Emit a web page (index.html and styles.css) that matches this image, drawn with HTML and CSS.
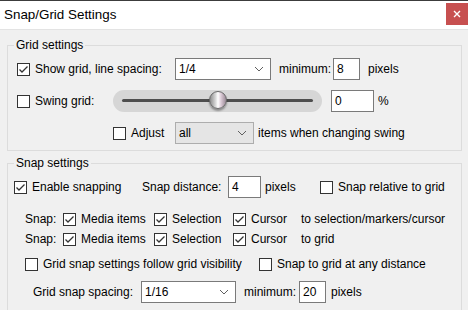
FILE: index.html
```html
<!DOCTYPE html>
<html lang="en">
<head>
    <meta charset="UTF-8">
    <title>Snap/Grid Settings</title>
    <link rel="stylesheet" href="styles.css">
</head>
<body>
    <div class="dialog">
        <div class="titlebar">
            <span class="title">Snap/Grid Settings</span>
            <span class="close">
                <svg width="8" height="8" viewBox="0 0 8 8"><path d="M1 1L7 7M7 1L1 7" stroke="#fff" stroke-width="1.4"/></svg>
            </span>
        </div>

        <fieldset class="group grid-group">
            <legend>Grid settings</legend>
            <div class="row r1">
                <label class="check w-show"><span class="box on"><svg width="11" height="11" viewBox="0 0 11 11"><path d="M1.5 5.5L4 8L9.5 2.5" fill="none" stroke="#333" stroke-width="1.3"/></svg></span>Show grid, line spacing:</label>
                <div class="combo w96"><span>1/4</span><svg width="10" height="6" viewBox="0 0 10 6"><path d="M1 1L5 5L9 1" fill="none" stroke="#606060" stroke-width="1"/></svg></div>
                <span class="lbl gap8 w54">minimum:</span>
                <div class="edit w27">8</div>
                <span class="lbl gap8">pixels</span>
            </div>
            <div class="row r2">
                <label class="check w-swing"><span class="box"></span>Swing grid:</label>
                <div class="slider">
                    <span class="track"></span>
                    <span class="thumb"></span>
                </div>
                <div class="edit w43 gap9">0</div>
                <span class="lbl gap4">%</span>
            </div>
            <div class="row r3">
                <label class="check w-adjust"><span class="box"></span>Adjust</label>
                <div class="combo list w79"><span>all</span><svg width="10" height="6" viewBox="0 0 10 6"><path d="M1 1L5 5L9 1" fill="none" stroke="#606060" stroke-width="1"/></svg></div>
                <span class="lbl gap4">items when changing swing</span>
            </div>
        </fieldset>

        <fieldset class="group snap-group">
            <legend>Snap settings</legend>
            <div class="row s1">
                <label class="check w-enable"><span class="box on"><svg width="11" height="11" viewBox="0 0 11 11"><path d="M1.5 5.5L4 8L9.5 2.5" fill="none" stroke="#333" stroke-width="1.3"/></svg></span>Enable snapping</label>
                <span class="lbl w86">Snap distance:</span>
                <div class="edit w33">4</div>
                <span class="lbl gap4 w55">pixels</span>
                <label class="check"><span class="box"></span>Snap relative to grid</label>
            </div>
            <div class="row s2">
                <span class="lbl w38">Snap:</span>
                <label class="check w91"><span class="box on"><svg width="11" height="11" viewBox="0 0 11 11"><path d="M1.5 5.5L4 8L9.5 2.5" fill="none" stroke="#333" stroke-width="1.3"/></svg></span>Media items</label>
                <label class="check w79"><span class="box on"><svg width="11" height="11" viewBox="0 0 11 11"><path d="M1.5 5.5L4 8L9.5 2.5" fill="none" stroke="#333" stroke-width="1.3"/></svg></span>Selection</label>
                <label class="check w68"><span class="box on"><svg width="11" height="11" viewBox="0 0 11 11"><path d="M1.5 5.5L4 8L9.5 2.5" fill="none" stroke="#333" stroke-width="1.3"/></svg></span>Cursor</label>
                <span class="lbl">to selection/markers/cursor</span>
            </div>
            <div class="row s3">
                <span class="lbl w38">Snap:</span>
                <label class="check w91"><span class="box on"><svg width="11" height="11" viewBox="0 0 11 11"><path d="M1.5 5.5L4 8L9.5 2.5" fill="none" stroke="#333" stroke-width="1.3"/></svg></span>Media items</label>
                <label class="check w79"><span class="box on"><svg width="11" height="11" viewBox="0 0 11 11"><path d="M1.5 5.5L4 8L9.5 2.5" fill="none" stroke="#333" stroke-width="1.3"/></svg></span>Selection</label>
                <label class="check w68"><span class="box on"><svg width="11" height="11" viewBox="0 0 11 11"><path d="M1.5 5.5L4 8L9.5 2.5" fill="none" stroke="#333" stroke-width="1.3"/></svg></span>Cursor</label>
                <span class="lbl">to grid</span>
            </div>
            <div class="row s4">
                <label class="check w234"><span class="box"></span>Grid snap settings follow grid visibility</label>
                <label class="check"><span class="box"></span>Snap to grid at any distance</label>
            </div>
            <div class="row s5">
                <span class="lbl w108">Grid snap spacing:</span>
                <div class="combo w95"><span>1/16</span><svg width="10" height="6" viewBox="0 0 10 6"><path d="M1 1L5 5L9 1" fill="none" stroke="#606060" stroke-width="1"/></svg></div>
                <span class="lbl gap8 w55">minimum:</span>
                <div class="edit w27">20</div>
                <span class="lbl gap5">pixels</span>
            </div>
        </fieldset>
    </div>
</body>
</html>
```

FILE: styles.css
```css
body {
    margin: 0;
    padding: 0;
    background: #f0f0f0;
    font-family: 'Liberation Sans', Arial, sans-serif;
    font-size: 12px;
    color: #000;
    overflow: hidden;
}
.dialog {
    width: 468px;
    height: 310px;
    overflow: hidden;
}
.titlebar {
    display: flex;
    justify-content: space-between;
    height: 28px;
    background: #fff;
    border-top: 1px solid #3c3c3c;
    border-bottom: 1px solid #e3e3e3;
}
.title {
    font-size: 13.4px;
    padding-left: 4px;
    line-height: 28px;
}
.close {
    display: flex;
    align-items: center;
    justify-content: center;
    width: 22px;
    height: 22px;
    margin-top: 2px;
    background: #c75050;
}

/* group boxes */
.group {
    margin: 0 6px 0 7px;
    padding: 0;
    border: 1px solid #dcdcdc;
    min-width: 0;
}
.group legend {
    margin-left: 6px;
    padding: 0 2px;
    line-height: 16px;
}
.grid-group {
    margin-top: 7px;
    padding-bottom: 6px;
}
.snap-group {
    margin-top: 4px;
    padding-bottom: 20px;
}

.row {
    display: flex;
    align-items: center;
    height: 22px;
    white-space: nowrap;
}
.r1 { margin-top: 5px; margin-left: 9px; }
.r2 { margin-top: 10px; margin-left: 9px; }
.r3 { margin-top: 10px; margin-left: 105px; }
.s1 { margin-top: 5px; margin-left: 6px; }
.s2 { margin-top: 11px; margin-left: 17px; height: 20px; }
.s3 { margin-left: 17px; height: 20px; }
.s4 { margin-top: 5px; margin-left: 17px; height: 20px; }
.s5 { margin-top: 7px; margin-left: 25px; }

/* checkbox */
.check {
    display: flex;
    align-items: center;
    gap: 5px;
    flex: none;
}
.box {
    display: flex;
    align-items: center;
    justify-content: center;
    width: 11px;
    height: 11px;
    border: 1px solid #333;
    background: #fff;
    flex: none;
}

.lbl { flex: none; }

/* combo and edit */
.combo {
    display: flex;
    align-items: center;
    justify-content: space-between;
    box-sizing: border-box;
    height: 22px;
    padding: 0 6px 0 3px;
    border: 1px solid #7a7a7a;
    background: #fff;
    flex: none;
}
.combo.list {
    background: #e5e5e5;
    border-color: #adadad;
}
.edit {
    box-sizing: border-box;
    height: 22px;
    line-height: 20px;
    padding-left: 3px;
    border: 1px solid #7a7a7a;
    background: #fff;
    flex: none;
}

/* slider */
.slider {
    position: relative;
    width: 209px;
    height: 22px;
    border-radius: 11px;
    background: #d6d6d6;
    flex: none;
}
.slider .track {
    position: absolute;
    left: 9px;
    right: 9px;
    top: 9px;
    height: 3px;
    border-radius: 2px;
    background: #4e4e4e;
}
.slider .thumb {
    position: absolute;
    left: 96px;
    top: 1px;
    width: 16px;
    height: 16px;
    border-radius: 50%;
    border: 1px solid #6a6a6a;
    background: linear-gradient(90deg, #8c8c8c 0%, #d8d8d8 35%, #ffffff 50%, #d9c8d4 70%, #9a8a96 100%);
    box-shadow: 0 2px 2px rgba(0, 0, 0, 0.35);
}

/* widths */
.w-show { width: 158px; }
.w-swing { width: 96px; }
.w-adjust { width: 62px; }
.w-enable { width: 128px; }
.w96 { width: 96px; }
.w95 { width: 95px; }
.w79 { width: 79px; }
.w27 { width: 27px; }
.w33 { width: 33px; }
.w43 { width: 43px; }
.w54 { width: 54px; }
.w55 { width: 55px; }
.w86 { width: 86px; }
.w38 { width: 38px; }
.w91 { width: 91px; }
.w68 { width: 68px; }
.w108 { width: 108px; }
.w234 { width: 234px; }
.gap4 { margin-left: 4px; }
.gap5 { margin-left: 5px; }
.gap8 { margin-left: 8px; }
.gap9 { margin-left: 9px; }
```
